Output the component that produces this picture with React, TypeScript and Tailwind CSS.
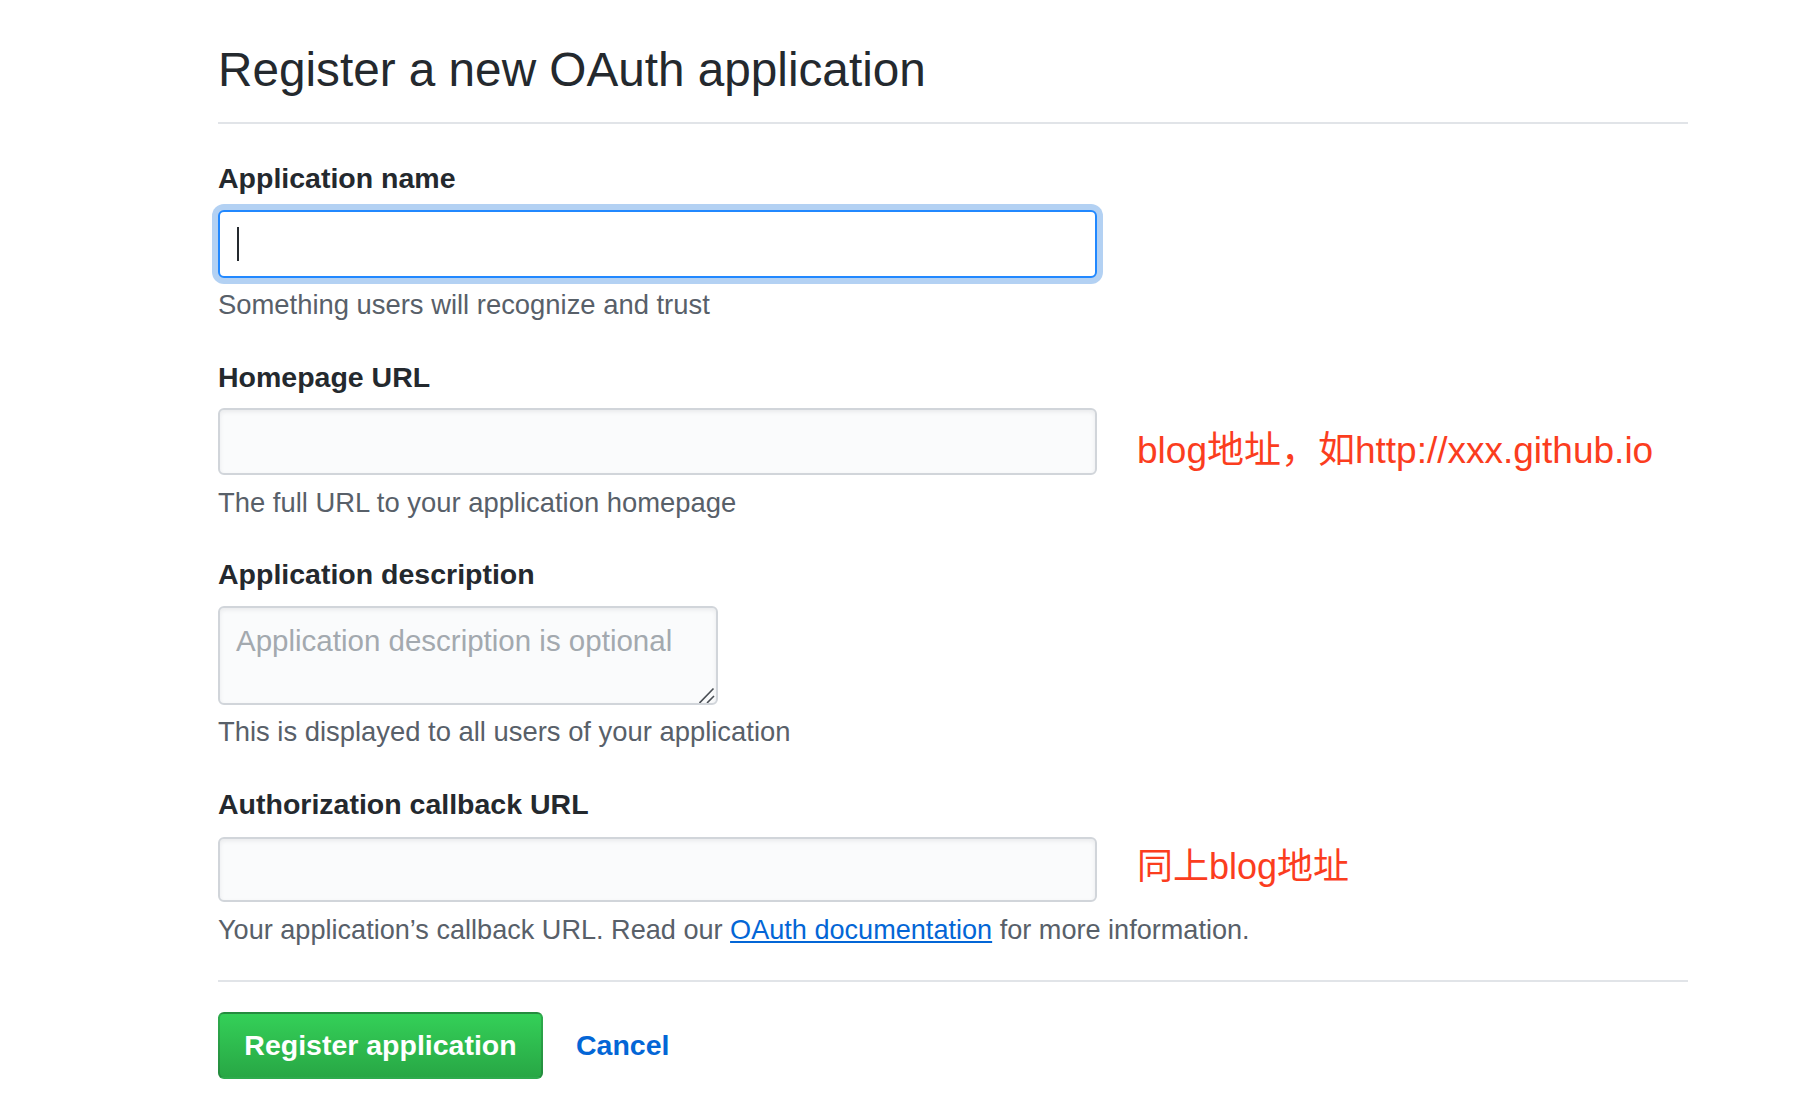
const font = { fontFamily: '"Liberation Sans", "Noto Sans CJK SC", Arial, sans-serif' };

const Label = ({ children, mb = "mb-3" }: { children: React.ReactNode; mb?: string }) => (
  <label className={`block text-[28.5px] leading-[42px] font-bold text-[#24292e] ${mb}`}>{children}</label>
);

const Note = ({ children, mt = "mt-2" }: { children: React.ReactNode; mt?: string }) => (
  <p className={`${mt} text-[27.4px] leading-[40px] text-[#586069]`}>{children}</p>
);

const inputCls =
  "w-[879px] rounded-[6px] border-2 border-[#d1d5da] bg-[#fafbfc] shadow-[inset_0_2px_4px_rgba(27,31,35,0.075)] px-4 text-[29px] outline-none";

export default function App() {
  return (
    <div className="min-h-screen bg-white" style={font}>
      <div className="ml-[218px] w-[1470px] pt-[34px]">
        <h1 className="text-[47.7px] leading-[72px] font-normal text-[#24292e] pb-4 border-b-2 border-[#e1e4e8]">
          Register a new OAuth application
        </h1>

        <form onSubmit={(e) => e.preventDefault()}>
          {/* Application name (focused) */}
          <div className="mt-[33px]">
            <Label mb="mb-[11px]">Application name</Label>
            <div className="w-[879px] h-[68px] rounded-[6px] border-2 border-[#2188ff] bg-white shadow-[0_0_0_6px_rgba(3,102,214,0.3)] flex items-center pl-[17px]">
              <span className="w-[2px] h-[34px] bg-[#24292e]" />
            </div>
            <Note mt="mt-[7px]">Something users will recognize and trust</Note>
          </div>

          {/* Homepage URL */}
          <div className="mt-[31px]">
            <Label mb="mb-[10px]">Homepage URL</Label>
            <div className="flex items-center">
              <input className={`${inputCls} h-[67px]`} />
              <span className="ml-10 relative top-[9px] text-[37px] leading-[44px] text-[#fb3d1e] whitespace-nowrap">
                blog地址，如http://xxx.github.io
              </span>
            </div>
            <Note mt="mt-2">The full URL to your application homepage</Note>
          </div>

          {/* Description */}
          <div className="mt-[30px]">
            <Label mb="mb-[11px]">Application description</Label>
            <div className="relative w-[500px]">
              <textarea
                placeholder="Application description is optional"
                className="block w-[500px] h-[99px] rounded-[6px] border-2 border-[#d1d5da] bg-[#fafbfc] shadow-[inset_0_2px_4px_rgba(27,31,35,0.075)] px-4 pt-[11px] text-[29.5px] leading-[44px] text-[#24292e] placeholder:text-[#a3a9af] outline-none resize-none"
              />
              <svg className="absolute right-[3px] bottom-[2px]" width="16" height="16" viewBox="0 0 16 16">
                <path d="M0.5 16 L14.5 1.5 M8 16 L15 9" stroke="#4a4f55" strokeWidth="1.6" fill="none" />
              </svg>
            </div>
            <Note mt="mt-[7px]">This is displayed to all users of your application</Note>
          </div>

          {/* Callback URL */}
          <div className="mt-[31px]">
            <Label mb="mb-3">Authorization callback URL</Label>
            <div className="flex items-center">
              <input className={`${inputCls} h-[65px]`} />
              <span className="ml-10 relative -top-[3px] text-[36px] leading-[44px] text-[#fb3d1e] whitespace-nowrap">
                同上blog地址
              </span>
            </div>
            <Note mt="mt-2">
              <span className="text-[27.1px]">
                Your application’s callback URL. Read our{" "}
                <a href="#" className="text-[#0366d6] underline">
                  OAuth documentation
                </a>{" "}
                for more information.
              </span>
            </Note>
          </div>

          <div className="mt-[30px] border-t-2 border-[#e1e4e8]" />

          <div className="mt-[30px] flex items-center gap-[33px]">
            <button
              type="submit"
              className="w-[325px] h-[67px] rounded-[6px] border-2 border-[rgba(27,31,35,0.2)] bg-gradient-to-b from-[#34d058] to-[#28a745] text-white text-[28.5px] font-bold flex items-center justify-center"
            >
              Register application
            </button>
            <a href="#" className="text-[28.5px] font-bold text-[#0366d6]">
              Cancel
            </a>
          </div>
        </form>
      </div>
    </div>
  );
}
